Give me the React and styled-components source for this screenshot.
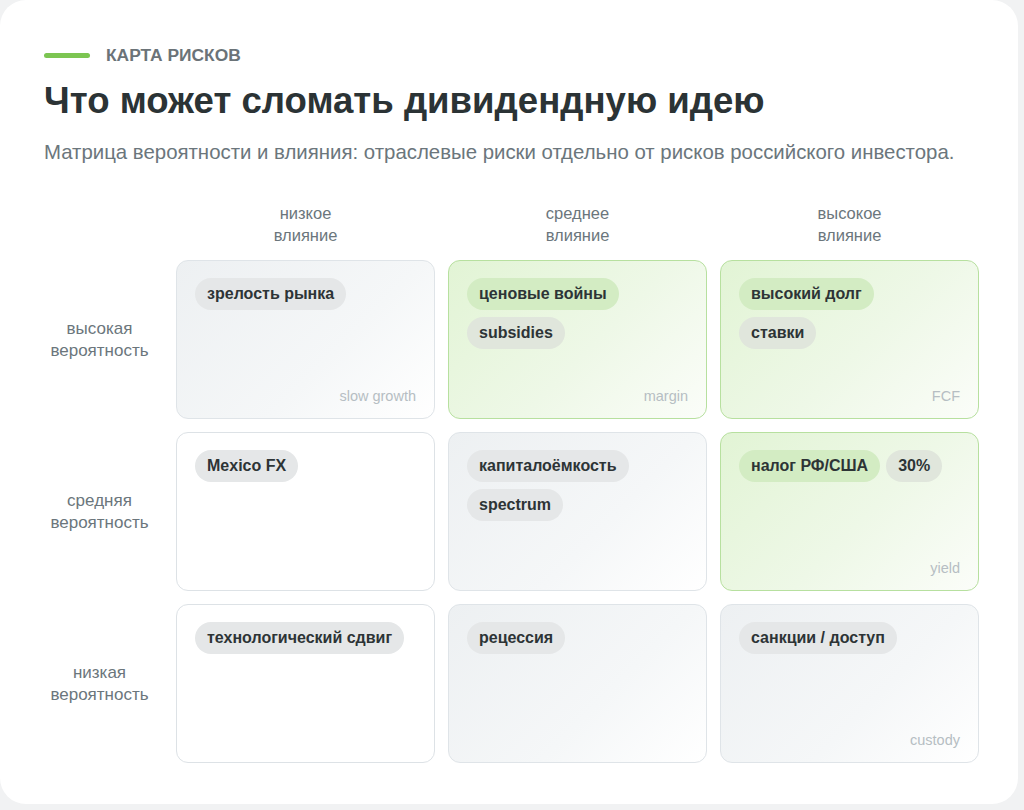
import React from "react";
import styled, { createGlobalStyle } from "styled-components";

const G = createGlobalStyle`
  body { margin: 0; background: #f1f2f3; font-family: "Liberation Sans", Arial, sans-serif; }
`;
const Card = styled.div`
  width: 1018px; height: 804px; box-sizing: border-box; background: #fff;
  border-radius: 26px; padding: 45px 44px 0 44px;
`;
const Eyebrow = styled.div`
  display: flex; align-items: center; gap: 16px; color: #6b7378; font-weight: 700; font-size: 17.4px; height: 20px;
`;
const Bar = styled.span` width: 46px; height: 5px; border-radius: 3px; background: #7cc552; `;
const Title = styled.h1` margin: 14px 0 0; font-size: 36.6px; font-weight: 700; color: #2b3335; line-height: 44px; `;
const Sub = styled.p` margin: 16px 0 0; font-size: 20.4px; color: #6b767c; line-height: 26px; `;
const Grid = styled.div`
  margin-top: 40px; display: grid; grid-template-columns: 119px 259px 259px 259px;
  grid-template-rows: 46px 159px 159px 159px; gap: 13px;
  margin-top: 36px;
`;
const ColHead = styled.div` text-align: center; font-size: 16.5px; color: #6b767c; line-height: 22px; margin-top: 1px;`;
const RowHead = styled.div` display: flex; align-items: center; justify-content: center; text-align: center; font-size: 17px; color: #6b767c; line-height: 22px; margin-left: -8px;`;
const styles = {
  gray: "border: 1px solid #dfe4e8; background: linear-gradient(135deg, #edf0f2 0%, #f5f7f8 60%, #ffffff 100%);",
  green: "border: 1px solid #b7e09f; background: linear-gradient(135deg, #e2f4d5 0%, #eef8e7 55%, #fbfdf9 100%);",
  white: "border: 1px solid #dde2e6; background: #fff;",
};
const Cell = styled.div`
  box-sizing: border-box; border-radius: 12px; ${p => styles[p.$k]}
  padding: 17px 18px 14px; display: flex; flex-direction: column;
`;
const Chips = styled.div`
  display: flex; flex-wrap: wrap; gap: 7px 6px; align-content: flex-start; flex: 1;
  flex-direction: ${p => (p.$col ? "column" : "row")}; align-items: flex-start;
`;
const Chip = styled.span`
  height: 32px; line-height: 32px; padding: 0 12px; border-radius: 16px; font-weight: 700; font-size: 16px; color: #2d3436;
  background: ${p => (p.$g ? "#d3ecc3" : p.$on ? "#e0e6dc" : "#e5e7e8")};
`;
const Foot = styled.div` text-align: right; font-size: 14.5px; color: #b6bec3; `;

const cols = [["низкое", "влияние"], ["среднее", "влияние"], ["высокое", "влияние"]];
const rows = [
  { h: ["высокая", "вероятность"], c: [
    { k: "gray", chips: [["зрелость рынка"]], f: "slow growth" },
    { k: "green", chips: [["ценовые войны", 1], ["subsidies"]], f: "margin", br: true },
    { k: "green", chips: [["высокий долг", 1], ["ставки"]], f: "FCF", br: true },
  ]},
  { h: ["средняя", "вероятность"], c: [
    { k: "white", chips: [["Mexico FX"]] },
    { k: "gray", chips: [["капиталоёмкость"], ["spectrum"]], br: true },
    { k: "green", chips: [["налог РФ/США", 1], ["30%"]], f: "yield" },
  ]},
  { h: ["низкая", "вероятность"], c: [
    { k: "white", chips: [["технологический сдвиг"]] },
    { k: "gray", chips: [["рецессия"]] },
    { k: "gray", chips: [["санкции / доступ"]], f: "custody" },
  ]},
];

export default function App() {
  return (
    <Card>
      <G />
      <Eyebrow><Bar />КАРТА РИСКОВ</Eyebrow>
      <Title>Что может сломать дивидендную идею</Title>
      <Sub>Матрица вероятности и влияния: отраслевые риски отдельно от рисков российского инвестора.</Sub>
      <Grid>
        <div />
        {cols.map((c, i) => <ColHead key={i}>{c[0]}<br />{c[1]}</ColHead>)}
        {rows.map((r, i) => (
          <React.Fragment key={i}>
            <RowHead>{r.h[0]}<br />{r.h[1]}</RowHead>
            {r.c.map((c, j) => (
              <Cell key={j} $k={c.k}>
                <Chips $col={c.br}>
                  {c.chips.map(([t, g], n) => <Chip key={n} $g={g} $on={c.k === "green"}>{t}</Chip>)}
                </Chips>
                {c.f && <Foot>{c.f}</Foot>}
              </Cell>
            ))}
          </React.Fragment>
        ))}
      </Grid>
    </Card>
  );
}
